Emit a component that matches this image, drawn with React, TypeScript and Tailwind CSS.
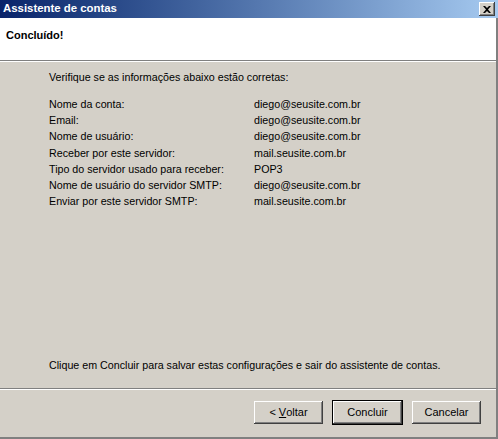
import React from 'react';

const ROWS: [string, string][] = [
  ['Nome da conta:', 'diego@seusite.com.br'],
  ['Email:', 'diego@seusite.com.br'],
  ['Nome de usuário:', 'diego@seusite.com.br'],
  ['Receber por este servidor:', 'mail.seusite.com.br'],
  ['Tipo do servidor usado para receber:', 'POP3'],
  ['Nome de usuário do servidor SMTP:', 'diego@seusite.com.br'],
  ['Enviar por este servidor SMTP:', 'mail.seusite.com.br'],
];

const bevel =
  'shadow-[inset_-1px_-1px_#404040,inset_1px_1px_#ffffff,inset_-2px_-2px_#808080,inset_2px_2px_#d4d0c8]';

function Button({ children, primary }: { children: React.ReactNode; primary?: boolean }) {
  return (
    <button
      className={`w-[69px] h-[23px] bg-[#d4d0c8] text-black text-[11px] flex items-center justify-center ${bevel} ${
        primary ? 'outline outline-1 outline-black' : ''
      }`}
    >
      {children}
    </button>
  );
}

export default function App() {
  return (
    <div className="w-[498px] h-[439px] flex flex-col bg-[#d4d0c8] text-black text-[11px] font-['Liberation_Sans',Arial,sans-serif] overflow-hidden">
      {/* title bar */}
      <div className="h-[18px] shrink-0 flex items-center justify-between pl-[3px] pr-[3px] bg-gradient-to-r from-[#0a246a] to-[#a6caf0]">
        <span className="text-white font-bold text-[11.4px] leading-none">Assistente de contas</span>
        <div className={`w-[16px] h-[14px] bg-[#d4d0c8] flex items-center justify-center ${bevel}`}>
          <svg width="8" height="7" viewBox="0 0 8 7">
            <path d="M0 0h2l2 2 2-2h2L5 3.5 8 7H6L4 5 2 7H0l3-3.5z" fill="#000" />
          </svg>
        </div>
      </div>

      <div className="flex-1 flex flex-col border-r-2 border-b-2 border-r-[#808080] border-b-[#808080]">
        {/* header */}
        <div className="h-[43px] shrink-0 bg-white pl-[6px] pt-[9px] border-b border-[#808080]">
          <span className="font-bold leading-[13px]">Concluído!</span>
        </div>
        <div className="h-px bg-white" />

        {/* body */}
        <div className="flex-1 flex flex-col pl-[49px] pt-[9px] pb-[16px] text-[10.7px]">
          <div className="leading-[13px]">Verifique se as informações abaixo estão corretas:</div>
          <div className="mt-[12px] grid grid-cols-[205px_1fr] leading-[16.2px]">
            {ROWS.map(([label, value]) => (
              <React.Fragment key={label}>
                <div>{label}</div>
                <div>{value}</div>
              </React.Fragment>
            ))}
          </div>
          <div className="mt-auto leading-[13px]">
            Clique em Concluir para salvar estas configurações e sair do assistente de contas.
          </div>
        </div>

        <div className="h-px bg-[#808080]" />
        <div className="h-px bg-white" />

        {/* buttons */}
        <div className="h-[47px] shrink-0 flex items-start justify-end gap-[10px] pt-[11px] pr-[15px]">
          <Button>
            &lt;&nbsp;<span className="underline">V</span>oltar
          </Button>
          <Button primary>Concluir</Button>
          <Button>Cancelar</Button>
        </div>
      </div>
    </div>
  );
}
